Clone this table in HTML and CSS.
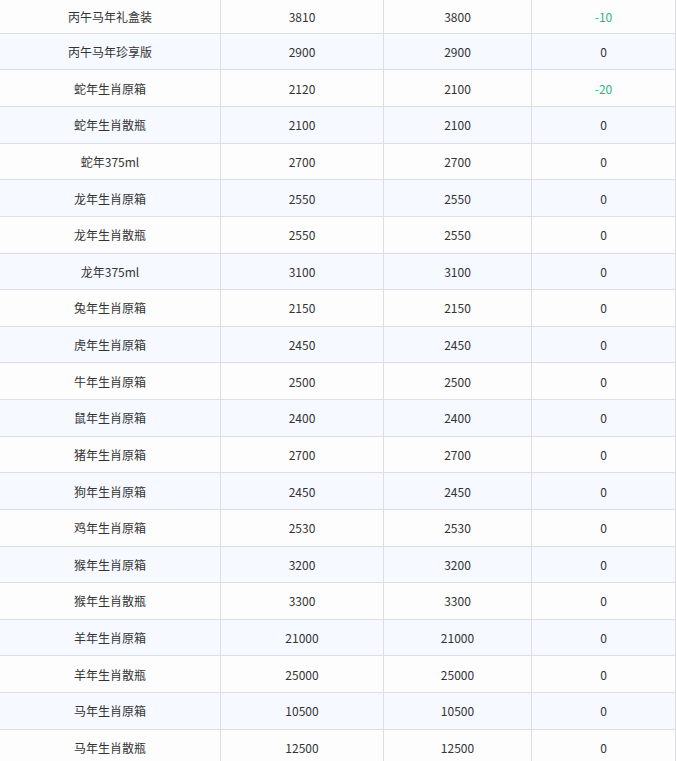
FILE: index.html
```html
<!DOCTYPE html>
<html lang="zh-CN">
<head>
<meta charset="utf-8">
<title>价格表</title>
<link rel="stylesheet" href="styles.css">
</head>
<body>
<div class="table">
  <div class="row first"><div class="cell">丙午马年礼盒装</div><div class="cell">3810</div><div class="cell">3800</div><div class="cell down">-10</div></div>
  <div class="row"><div class="cell">丙午马年珍享版</div><div class="cell">2900</div><div class="cell">2900</div><div class="cell">0</div></div>
  <div class="row"><div class="cell">蛇年生肖原箱</div><div class="cell">2120</div><div class="cell">2100</div><div class="cell down">-20</div></div>
  <div class="row"><div class="cell">蛇年生肖散瓶</div><div class="cell">2100</div><div class="cell">2100</div><div class="cell">0</div></div>
  <div class="row"><div class="cell">蛇年375ml</div><div class="cell">2700</div><div class="cell">2700</div><div class="cell">0</div></div>
  <div class="row"><div class="cell">龙年生肖原箱</div><div class="cell">2550</div><div class="cell">2550</div><div class="cell">0</div></div>
  <div class="row"><div class="cell">龙年生肖散瓶</div><div class="cell">2550</div><div class="cell">2550</div><div class="cell">0</div></div>
  <div class="row"><div class="cell">龙年375ml</div><div class="cell">3100</div><div class="cell">3100</div><div class="cell">0</div></div>
  <div class="row"><div class="cell">兔年生肖原箱</div><div class="cell">2150</div><div class="cell">2150</div><div class="cell">0</div></div>
  <div class="row"><div class="cell">虎年生肖原箱</div><div class="cell">2450</div><div class="cell">2450</div><div class="cell">0</div></div>
  <div class="row"><div class="cell">牛年生肖原箱</div><div class="cell">2500</div><div class="cell">2500</div><div class="cell">0</div></div>
  <div class="row"><div class="cell">鼠年生肖原箱</div><div class="cell">2400</div><div class="cell">2400</div><div class="cell">0</div></div>
  <div class="row"><div class="cell">猪年生肖原箱</div><div class="cell">2700</div><div class="cell">2700</div><div class="cell">0</div></div>
  <div class="row"><div class="cell">狗年生肖原箱</div><div class="cell">2450</div><div class="cell">2450</div><div class="cell">0</div></div>
  <div class="row"><div class="cell">鸡年生肖原箱</div><div class="cell">2530</div><div class="cell">2530</div><div class="cell">0</div></div>
  <div class="row"><div class="cell">猴年生肖原箱</div><div class="cell">3200</div><div class="cell">3200</div><div class="cell">0</div></div>
  <div class="row"><div class="cell">猴年生肖散瓶</div><div class="cell">3300</div><div class="cell">3300</div><div class="cell">0</div></div>
  <div class="row"><div class="cell">羊年生肖原箱</div><div class="cell">21000</div><div class="cell">21000</div><div class="cell">0</div></div>
  <div class="row"><div class="cell">羊年生肖散瓶</div><div class="cell">25000</div><div class="cell">25000</div><div class="cell">0</div></div>
  <div class="row"><div class="cell">马年生肖原箱</div><div class="cell">10500</div><div class="cell">10500</div><div class="cell">0</div></div>
  <div class="row"><div class="cell">马年生肖散瓶</div><div class="cell">12500</div><div class="cell">12500</div><div class="cell">0</div></div>
</div>
</body>
</html>
```

FILE: styles.css
```css
html, body {
  margin: 0;
  padding: 0;
  background: #ffffff;
}
body {
  font-family: "Noto Sans CJK SC", "Noto Sans", sans-serif;
  font-size: 12px;
  color: #333333;
  overflow: hidden;
}
.table {
  width: 676px;
  display: flex;
  flex-direction: column;
}
.row {
  display: grid;
  grid-template-columns: 221px 163px 148px 144px;
  height: 36.63px;
  box-sizing: border-box;
  border-bottom: 1px solid #dcdee2;
  background: #fdfdfd;
  flex: none;
}
.row.first {
  height: 33.8px;
}
.row:nth-child(even) {
  background: #f6f9ff;
}
.cell {
  display: flex;
  align-items: center;
  justify-content: center;
  border-right: 1px solid #dcdee2;
  box-sizing: border-box;
  white-space: nowrap;
}
.down {
  color: #2db87a;
}
```
